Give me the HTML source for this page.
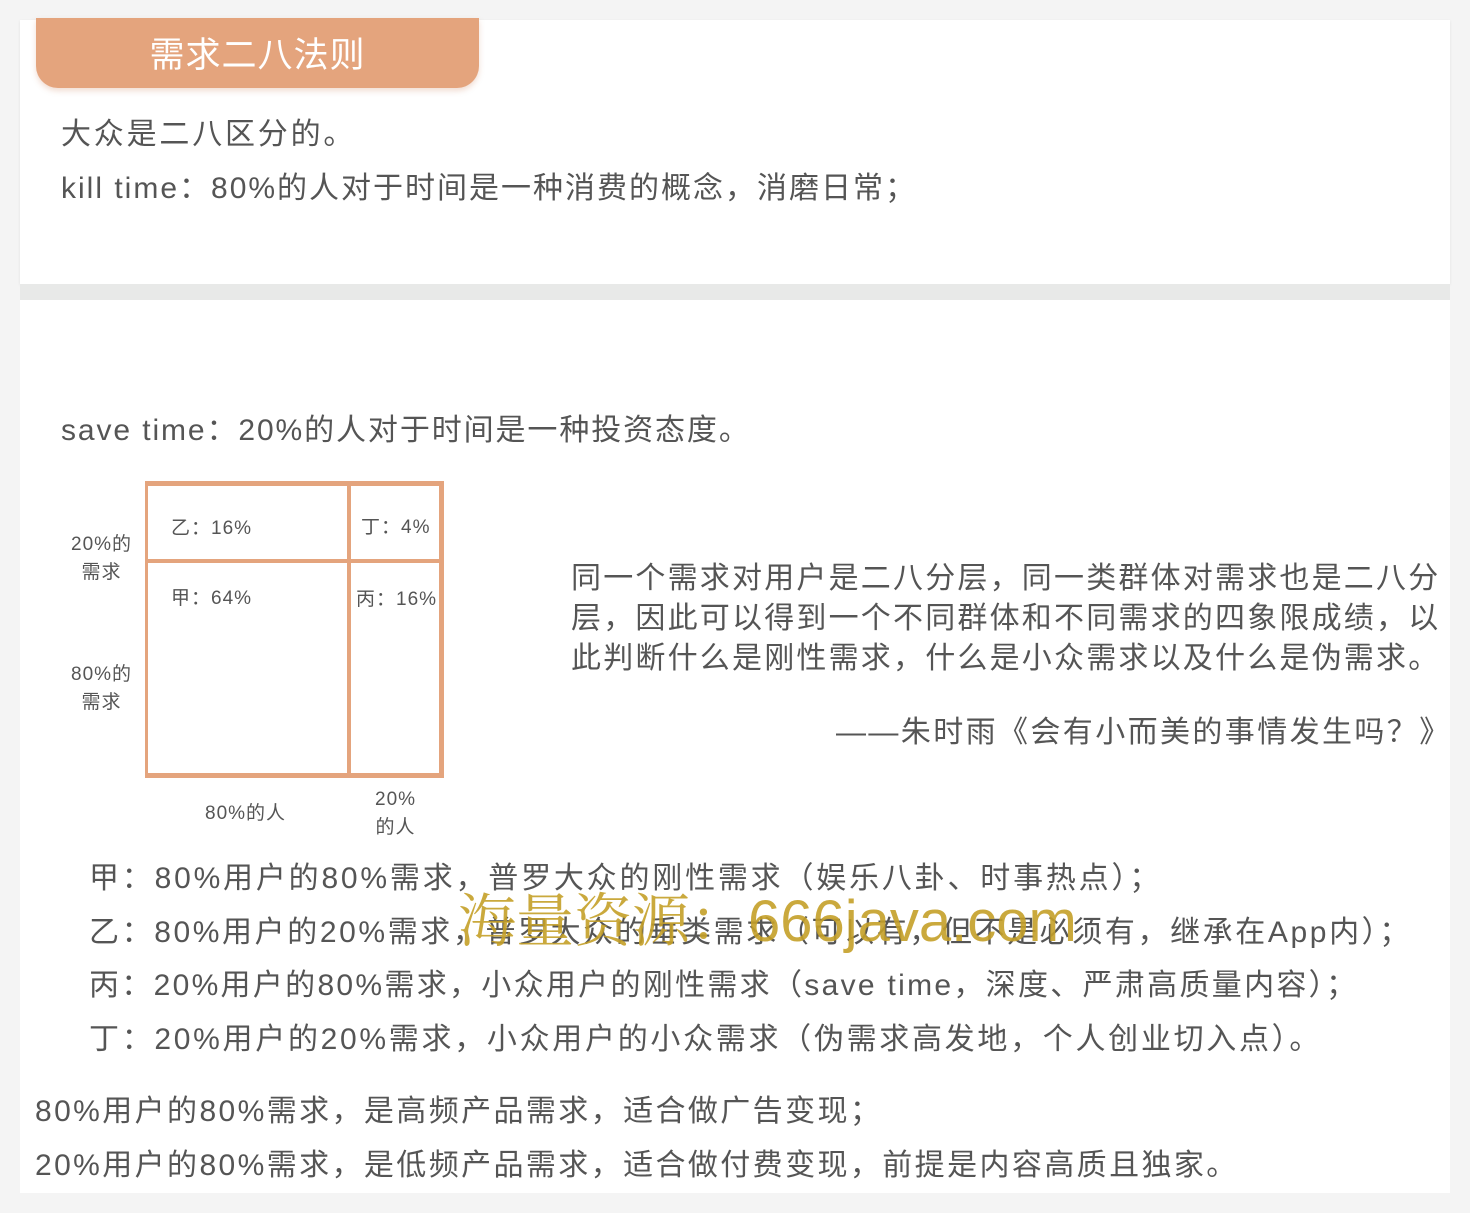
<!DOCTYPE html>
<html><head><meta charset="utf-8"><style>
body{margin:0;width:1470px;height:1213px;background:#f4f4f4;position:relative;overflow:hidden;font-family:"Liberation Sans","Noto Sans CJK SC",sans-serif;color:#555;}
.card{position:absolute;left:20px;width:1430px;background:#fff;}
.t{position:absolute;white-space:nowrap;}
.f30{font-size:30px;letter-spacing:2.8px;}
.s{font-size:19px;color:#555;letter-spacing:1px;}
</style></head><body>
<div class="card" style="top:20px;height:264px;box-shadow:0 1px 3px rgba(0,0,0,0.08)"></div>
<div style="position:absolute;left:20px;width:1430px;top:284px;height:16px;background:#e8e9e8"></div>
<div class="card" style="top:300px;height:893px"></div>
<div style="position:absolute;left:36px;top:18px;width:443px;height:70px;background:#e4a47d;border-radius:0 0 22px 22px;box-shadow:0 3px 6px rgba(200,120,80,0.25)"></div>
<div class="t" style="left:36px;width:443px;text-align:center;top:27px;font-size:35px;color:#fff;letter-spacing:1px">需求二八法则</div>
<div class="t f30" style="left:61px;top:109px">大众是二八区分的。</div>
<div class="t f30" style="left:61px;top:163px;letter-spacing:2px">kill time：80%的人对于时间是一种消费的概念，消磨日常；</div>
<div class="t f30" style="left:61px;top:405px;letter-spacing:1.9px">save time：20%的人对于时间是一种投资态度。</div>
<div style="position:absolute;left:145px;top:481px;width:291px;height:287px;border:3px solid #e4a47d;border-width:5px 5px 5px 3px"></div>
<div style="position:absolute;left:347px;top:481px;width:4px;height:292px;background:#e4a47d"></div>
<div style="position:absolute;left:145px;top:559px;width:296px;height:4px;background:#e4a47d"></div>
<div class="t s" style="left:171px;top:513px">乙：16%</div>
<div class="t s" style="left:361px;top:512px">丁：4%</div>
<div class="t s" style="left:171px;top:583px">甲：64%</div>
<div class="t s" style="left:356px;top:584px">丙：16%</div>
<div class="t s" style="left:71px;top:531px;text-align:center;line-height:28px">20%的<br>需求</div>
<div class="t s" style="left:71px;top:661px;text-align:center;line-height:28px">80%的<br>需求</div>
<div class="t s" style="left:205px;top:798px">80%的人</div>
<div class="t s" style="left:375px;top:786px;text-align:center;line-height:28px">20%<br>的人</div>
<div class="t" style="left:571px;top:559px;line-height:40px;font-size:30px;letter-spacing:2.2px">同一个需求对用户是二八分层，同一类群体对需求也是二八分<br>层，因此可以得到一个不同群体和不同需求的四象限成绩，以<br>此判断什么是刚性需求，什么是小众需求以及什么是伪需求。</div>
<div class="t" style="left:836px;top:707px;font-size:30px;letter-spacing:2.4px">——朱时雨《会有小而美的事情发生吗？》</div>
<div class="t f30" style="left:89px;top:853px">甲：80%用户的80%需求，普罗大众的刚性需求（娱乐八卦、时事热点）；</div>
<div class="t f30" style="left:89px;top:907px;letter-spacing:2.6px">乙：80%用户的20%需求，普罗大众的垂类需求（可以有，但不是必须有，继承在App内）；</div>
<div class="t f30" style="left:89px;top:960px;letter-spacing:2.3px">丙：20%用户的80%需求，小众用户的刚性需求（save time，深度、严肃高质量内容）；</div>
<div class="t f30" style="left:89px;top:1014px;letter-spacing:2.7px">丁：20%用户的20%需求，小众用户的小众需求（伪需求高发地，个人创业切入点）。</div>
<div class="t f30" style="left:35px;top:1086px;letter-spacing:2.4px">80%用户的80%需求，是高频产品需求，适合做广告变现；</div>
<div class="t f30" style="left:35px;top:1140px;letter-spacing:2.4px">20%用户的80%需求，是低频产品需求，适合做付费变现，前提是内容高质且独家。</div>
<div class="t" style="left:458px;top:874px;font-size:58px;color:rgba(196,160,40,0.9);font-family:'Liberation Sans','Noto Serif CJK SC',serif;">海量资源：666java.com</div>
</body></html>
